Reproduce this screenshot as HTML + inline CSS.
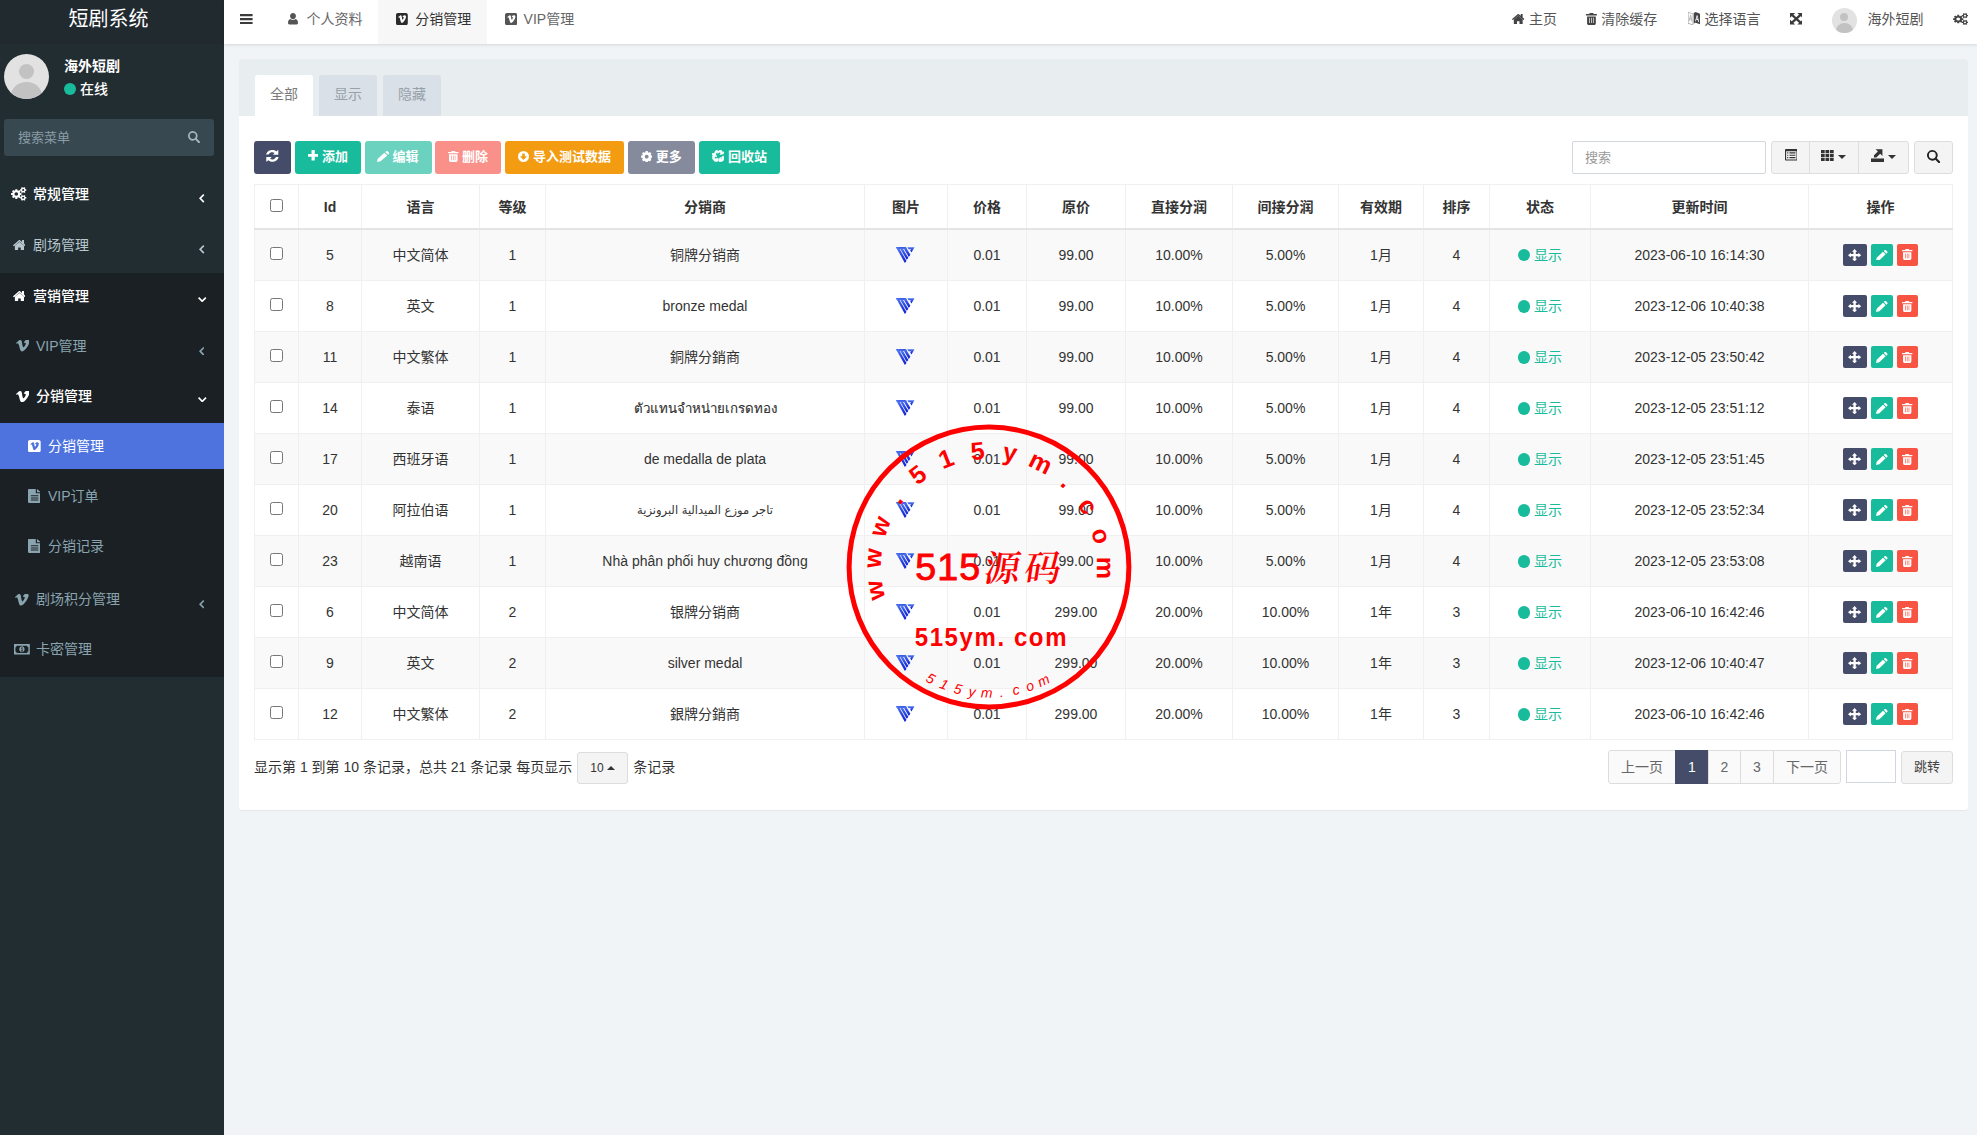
<!DOCTYPE html><html lang="zh-CN"><head><meta charset="utf-8"><title>短剧系统</title><style>
*{box-sizing:border-box;margin:0;padding:0}
html,body{width:1977px;height:1135px;overflow:hidden}
body{font-family:"Liberation Sans", "Noto Sans CJK SC", sans-serif;font-size:14px;line-height:20px;color:#333;background:#f1f4f6;position:relative}
.ic{display:inline-block;vertical-align:middle;fill:currentColor;flex:none}
/* sidebar */
#side{position:absolute;left:0;top:0;width:224px;height:1135px;background:#222d32;color:#b8c7ce}
#logo{position:absolute;left:0;top:0;width:224px;height:44px;background:#202a2f;color:#fff;font-size:20px;line-height:38px;text-align:center;padding-right:7px}
#avatar{position:absolute;left:4px;top:54px;width:45px;height:45px;border-radius:50%;background:#e2e2e2;overflow:hidden}
#avatar i{position:absolute;display:block;background:#c2c2c2;border-radius:50%}
#uname{position:absolute;left:64px;top:56px;color:#fff;font-weight:bold;font-size:14px;line-height:20px}
#ustat{position:absolute;left:64px;top:79px;color:#fff;font-size:14px;line-height:20px;font-weight:500}
#ustat b{display:inline-block;width:12px;height:12px;border-radius:50%;background:#18bc9c;vertical-align:-1px;margin-right:4px}
#sbox{position:absolute;left:4px;top:119px;width:210px;height:37px;background:#374850;border-radius:3px;color:#8a9ca6;font-size:13px;line-height:37px;padding-left:14px}
.mi{position:absolute;left:0;width:224px;height:50px;line-height:50px;font-size:14px;color:#b8c7ce;white-space:nowrap}
.mi span{position:absolute}
.mi.w{color:#fff;font-weight:500}
.mi.w2{color:#fff}
.mi.s{color:#8aa4af}
.mi .arr{right:17px;}
#dark{position:absolute;left:0;top:273px;width:224px;height:404px;background:#1a2024}
#act{position:absolute;left:0;top:423px;width:224px;height:46px;background:#4e73df}
/* navbar */
#nav{position:absolute;left:224px;top:0;width:1753px;height:44px;background:#fff;box-shadow:0 1px 3px rgba(0,0,0,.12)}
#nav .tab{position:absolute;top:0;height:44px;line-height:38px;font-size:14px;color:#666;white-space:nowrap}
#nav .tab.on{background:#f7f7f7;color:#333}
#nav .r{position:absolute;top:0;height:44px;line-height:38px;font-size:14px;color:#555;white-space:nowrap}
/* panel */
#panel{position:absolute;left:239px;top:59px;width:1729px;height:751px;background:#fff;border-radius:3px;box-shadow:0 1px 1px rgba(0,0,0,.05)}
#phead{position:absolute;left:0;top:0;width:100%;height:57px;background:#e8edf0;border-radius:3px 3px 0 0}
.pt{position:absolute;top:16px;height:41px;width:58px;line-height:38.500px;text-align:center;font-size:14px;color:#97a1a8;background:#d9e0e7;border-radius:3px 3px 0 0}
.pt.on{background:#fff;color:#7b7b7b}
.btn{position:absolute;top:141px;height:33px;border-radius:3px;color:#fff;font-size:13px;font-weight:bold;line-height:32px;white-space:nowrap}
/* table */
.tb{position:absolute;left:254px;top:184px;border-collapse:collapse;table-layout:fixed;width:1699px;font-size:14px;color:#333}
.tb th,.tb td{border:1px solid #f0f0f0;text-align:center;vertical-align:middle;padding:0;white-space:nowrap;overflow:hidden;line-height:20px}
.tb th{height:44px;padding-top:2px;font-weight:bold;border-bottom:2px solid #e4e4e4;color:#333}
.tb td{height:51px}
.tb tbody tr:first-child td{height:52px}
.tb tbody tr:nth-child(odd){background:#f9f9f9}
.cb{display:inline-block;width:13px;height:13px;border:1px solid #767676;border-radius:2.500px;background:#fff;vertical-align:middle;position:relative;top:-3px}
.st{color:#18bc9c}
.dot{display:inline-block;width:12.2px;height:12.2px;border-radius:50%;background:#18bc9c;margin-right:3.600px;vertical-align:-1.500px}
.ob{display:inline-flex;align-items:center;justify-content:center;height:21.800px;border-radius:2px;margin:0 2.150px;color:#fff;vertical-align:middle}
.b1{background:#444c69;width:23.700px}.b2{background:#18bc9c;width:21.400px}.b3{background:#f75444;width:21px}
.thumb{vertical-align:middle;position:relative;top:-1px;left:-0.500px}
.ar{font-family:"DejaVu Sans","Liberation Sans",sans-serif;font-size:11.500px}
.tb td.th{padding-top:2px;font-size:13.300px;-webkit-text-stroke:0.150px #333}
/* footer */
#info{position:absolute;left:254px;top:750px;height:34px;line-height:34px;font-size:14px;color:#333;white-space:nowrap}
#psize{display:inline-block;width:51px;height:32px;border:1px solid #ddd;background:#f4f4f4;border-radius:3px;text-align:center;line-height:30px;font-size:12px;margin:2px 5px 0 5px;vertical-align:top}
.pg{position:absolute;top:750px;height:34px;line-height:32px;text-align:center;font-size:14px;color:#666;border:1px solid #ddd;background:#fafafa}
.stamp{position:absolute;pointer-events:none}
</style></head><body><div id="side"><div id="logo">短剧系统</div><div id="avatar"><i style="left:15px;top:10px;width:15px;height:15px"></i><i style="left:7px;top:28px;width:31px;height:28px"></i></div><div id="uname">海外短剧</div><div id="ustat"><b></b>在线</div><div id="sbox">搜索菜单</div><svg class="ic " width="12" height="12.2" viewBox="1.2 1.2 13.6 13.6" preserveAspectRatio="none" style="position:absolute;left:188px;top:131px;fill:#a9b7be"><path fill-rule="evenodd" d="M6.600 1.200a5.400 5.400 0 0 1 4.500 8.400l3.400 3.400c.4.400.4 1 0 1.400l-.1.100c-.4.400-1 .4-1.400 0L9.600 11.100A5.400 5.400 0 1 1 6.600 1.200zm0 1.900a3.500 3.500 0 1 0 0 7 3.500 3.500 0 0 0 0-7z"/></svg><div id="dark"></div><div id="act"></div><div class="mi w" style="top:169px"><span style="left:33px">常规管理</span></div><svg class="ic " width="15.4" height="13.9" viewBox="0.2 0.6 15.7 15" preserveAspectRatio="none" style="position:absolute;left:11.4px;top:187.1px;fill:#fff"><path fill-rule="evenodd" d="M10.90 7.15 L10.90 9.25 L9.57 9.22 L9.13 10.29 L10.09 11.20 L8.60 12.69 L7.69 11.73 L6.62 12.17 L6.65 13.50 L4.55 13.50 L4.58 12.17 L3.51 11.73 L2.60 12.69 L1.11 11.20 L2.07 10.29 L1.63 9.22 L0.30 9.25 L0.30 7.15 L1.63 7.18 L2.07 6.11 L1.11 5.20 L2.60 3.71 L3.51 4.67 L4.58 4.23 L4.55 2.90 L6.65 2.90 L6.62 4.23 L7.69 4.67 L8.60 3.71 L10.09 5.20 L9.13 6.11 L9.57 7.18Z M3.70 8.20a1.90 1.90 0 1 0 3.80 0a1.90 1.90 0 1 0 -3.80 0Z M15.79 3.05 L15.79 4.75 L14.87 4.69 L14.42 5.47 L14.93 6.23 L13.45 7.09 L13.05 6.26 L12.15 6.26 L11.75 7.09 L10.27 6.23 L10.78 5.47 L10.33 4.69 L9.41 4.75 L9.41 3.05 L10.33 3.11 L10.78 2.33 L10.27 1.57 L11.75 0.71 L12.15 1.54 L13.05 1.54 L13.45 0.71 L14.93 1.57 L14.42 2.33 L14.87 3.11Z M11.50 3.90a1.10 1.10 0 1 0 2.20 0a1.10 1.10 0 1 0 -2.20 0Z M15.79 11.45 L15.79 13.15 L14.87 13.09 L14.42 13.87 L14.93 14.63 L13.45 15.49 L13.05 14.66 L12.15 14.66 L11.75 15.49 L10.27 14.63 L10.78 13.87 L10.33 13.09 L9.41 13.15 L9.41 11.45 L10.33 11.51 L10.78 10.73 L10.27 9.97 L11.75 9.11 L12.15 9.94 L13.05 9.94 L13.45 9.11 L14.93 9.97 L14.42 10.73 L14.87 11.51Z M11.50 12.30a1.10 1.10 0 1 0 2.20 0a1.10 1.10 0 1 0 -2.20 0Z"/></svg><svg class="ic " width="5.4" height="8.7" viewBox="5 3.2 6.1 9.6" preserveAspectRatio="none" style="position:absolute;left:199.2px;top:194.3px;fill:#fff"><path d="M9.800 3.200l1.300 1.300L7.600 8l3.500 3.500-1.300 1.300L5 8z"/></svg><div class="mi " style="top:220px"><span style="left:33px">剧场管理</span></div><svg class="ic " width="12.9" height="10.9" viewBox="0.5 1.3 15 12.1" preserveAspectRatio="none" style="position:absolute;left:12.6px;top:239.5px;fill:#b8c7ce"><path d="M8 3.400l5.300 4.400v4.900c0 .4-.3.700-.7.700H9.500v-3.700h-3v3.700H3.400c-.4 0-.7-.3-.7-.7V7.800L8 3.400zM15.400 7.500l-.7.800c-.1.100-.3.100-.4 0L8 3 1.700 8.300c-.1.100-.3.100-.4 0l-.7-.8c-.1-.1-.1-.3 0-.4L7.300 1.500c.4-.3 1-.3 1.400 0l2.300 1.900V1.600c0-.2.100-.3.300-.3h1.700c.2 0 .3.100.3.300v3.700l2.100 1.800c.1.100.1.300 0 .4z"/></svg><svg class="ic " width="5.4" height="8.7" viewBox="5 3.2 6.1 9.6" preserveAspectRatio="none" style="position:absolute;left:199.2px;top:245.4px;fill:#b8c7ce"><path d="M9.800 3.200l1.300 1.300L7.600 8l3.500 3.500-1.300 1.300L5 8z"/></svg><div class="mi w" style="top:271px"><span style="left:33px">营销管理</span></div><svg class="ic " width="12.9" height="10.9" viewBox="0.5 1.3 15 12.1" preserveAspectRatio="none" style="position:absolute;left:12.6px;top:290.6px;fill:#fff"><path d="M8 3.400l5.300 4.400v4.900c0 .4-.3.700-.7.700H9.500v-3.700h-3v3.700H3.400c-.4 0-.7-.3-.7-.7V7.800L8 3.400zM15.400 7.500l-.7.800c-.1.100-.3.100-.4 0L8 3 1.700 8.300c-.1.100-.3.100-.4 0l-.7-.8c-.1-.1-.1-.3 0-.4L7.300 1.500c.4-.3 1-.3 1.400 0l2.300 1.900V1.600c0-.2.100-.3.300-.3h1.700c.2 0 .3.100.3.300v3.700l2.100 1.800c.1.100.1.300 0 .4z"/></svg><svg class="ic " width="8.4" height="5.4" viewBox="3.2 4.9 9.6 6.1" preserveAspectRatio="none" style="position:absolute;left:198.4px;top:296.9px;fill:#fff"><path d="M3.200 6.200l1.300-1.300L8 8.400l3.500-3.500 1.300 1.300L8 11z"/></svg><div class="mi s" style="top:321px"><span style="left:36px">VIP管理</span></div><svg class="ic " width="13.4" height="11.4" viewBox="0.5 1.6 15.1 12.8" preserveAspectRatio="none" style="position:absolute;left:15.5px;top:340.4px;fill:#8aa4af"><path d="M15 4.600c-.1 1.400-1.100 3.400-3 5.900-2 2.600-3.700 3.900-5.100 3.900-.9 0-1.600-.8-2.200-2.400L3.500 7.600C3.100 6 2.600 5.200 2.100 5.200c-.1 0-.5.200-1.200.700L.2 5c.8-.7 1.500-1.300 2.200-2 1-.9 1.800-1.300 2.300-1.400 1.200-.1 1.900.7 2.200 2.400.3 1.900.5 3 .6 3.500.3 1.500.7 2.300 1.100 2.300.3 0 .8-.5 1.500-1.500.7-1 1-1.800 1.100-2.300.1-.9-.3-1.300-1.100-1.300-.4 0-.8.100-1.200.3.800-2.600 2.300-3.900 4.500-3.800 1.700.1 2.400 1.100 2.300 3.200z" transform="translate(0.300,0)"/></svg><svg class="ic " width="5.4" height="8.7" viewBox="5 3.2 6.1 9.6" preserveAspectRatio="none" style="position:absolute;left:199.1px;top:346.5px;fill:#8aa4af"><path d="M9.800 3.200l1.300 1.300L7.600 8l3.500 3.500-1.300 1.300L5 8z"/></svg><div class="mi w" style="top:371px"><span style="left:36px">分销管理</span></div><svg class="ic " width="13.4" height="11.4" viewBox="0.5 1.6 15.1 12.8" preserveAspectRatio="none" style="position:absolute;left:15.5px;top:390.5px;fill:#fff"><path d="M15 4.600c-.1 1.400-1.100 3.400-3 5.900-2 2.600-3.700 3.900-5.100 3.900-.9 0-1.600-.8-2.200-2.400L3.500 7.600C3.100 6 2.600 5.200 2.100 5.200c-.1 0-.5.200-1.200.700L.2 5c.8-.7 1.500-1.300 2.200-2 1-.9 1.800-1.300 2.300-1.400 1.200-.1 1.900.7 2.200 2.400.3 1.900.5 3 .6 3.500.3 1.500.7 2.300 1.100 2.300.3 0 .8-.5 1.500-1.500.7-1 1-1.800 1.100-2.300.1-.9-.3-1.300-1.100-1.300-.4 0-.8.100-1.200.3.800-2.600 2.300-3.900 4.500-3.800 1.700.1 2.400 1.100 2.300 3.200z" transform="translate(0.300,0)"/></svg><svg class="ic " width="8.6" height="5.6" viewBox="3.2 4.9 9.6 6.1" preserveAspectRatio="none" style="position:absolute;left:198.2px;top:396.9px;fill:#fff"><path d="M3.200 6.200l1.300-1.300L8 8.400l3.500-3.500 1.300 1.300L8 11z"/></svg><div class="mi w2" style="top:421px"><span style="left:48px">分销管理</span></div><svg class="ic " width="12.7" height="12.4" viewBox="1.5 1.5 13 13" preserveAspectRatio="none" style="position:absolute;left:27.9px;top:439.8px;fill:#fff"><path fill-rule="evenodd" d="M3.600 1.500h8.800c1.200 0 2.100.9 2.100 2.100v8.800c0 1.200-.9 2.100-2.100 2.100H3.600c-1.200 0-2.100-.9-2.100-2.100V3.600c0-1.200.9-2.100 2.100-2.100zM12.600 5.700c.1-1.300-.6-1.900-1.700-1.900-1.200 0-2 .8-2.300 2.200.6-.3 1.400-.3 1.300.4 0 .5-.4 1.100-.7 1.700-.4.600-.6.700-.9-.2-.3-1-.4-2.600-.7-3.400-.3-.7-.9-.8-1.500-.4-.8.500-1.500 1.200-2.200 1.800l.5.600c.4-.3.800-.5 1-.2.400.600.9 3.300 1.500 4.800.4.900 1 1.200 1.700.8 1.200-.7 3.700-3.600 4-6.200z"/></svg><div class="mi s" style="top:471px"><span style="left:48px">VIP订单</span></div><svg class="ic " width="12.6" height="13.9" viewBox="2 1 11 14" preserveAspectRatio="none" style="position:absolute;left:27.7px;top:489.1px;fill:#8aa4af"><path fill-rule="evenodd" d="M2.500 1h6.300v4.200H13v9c0 .5-.4.800-.8.800H2.800c-.5 0-.8-.4-.8-.8V1.800c0-.5.300-.8.500-.8zM9.800 1.100c.2.100.4.200.6.400l2.200 2.200c.2.200.3.400.4.600H9.800V1.100zM4.500 7.300v1h6.500v-1H4.500zM4.500 9.500v1h6.500v-1H4.500zM4.500 11.700v1h6.500v-1H4.500z"/></svg><div class="mi s" style="top:521px"><span style="left:48px">分销记录</span></div><svg class="ic " width="12.6" height="13.9" viewBox="2 1 11 14" preserveAspectRatio="none" style="position:absolute;left:27.7px;top:539.2px;fill:#8aa4af"><path fill-rule="evenodd" d="M2.500 1h6.300v4.200H13v9c0 .5-.4.800-.8.800H2.800c-.5 0-.8-.4-.8-.8V1.800c0-.5.300-.8.500-.8zM9.800 1.100c.2.100.4.200.6.400l2.200 2.200c.2.200.3.400.4.600H9.800V1.100zM4.500 7.300v1h6.500v-1H4.500zM4.500 9.500v1h6.500v-1H4.500zM4.500 11.700v1h6.500v-1H4.500z"/></svg><div class="mi s" style="top:574px"><span style="left:36px">剧场积分管理</span></div><svg class="ic " width="13.4" height="11.6" viewBox="0.5 1.6 15.1 12.8" preserveAspectRatio="none" style="position:absolute;left:15.3px;top:594.3px;fill:#8aa4af"><path d="M15 4.600c-.1 1.400-1.100 3.400-3 5.900-2 2.600-3.700 3.900-5.100 3.900-.9 0-1.600-.8-2.200-2.400L3.500 7.600C3.100 6 2.600 5.200 2.100 5.200c-.1 0-.5.200-1.200.700L.2 5c.8-.7 1.500-1.300 2.200-2 1-.9 1.800-1.300 2.300-1.400 1.200-.1 1.900.7 2.200 2.400.3 1.900.5 3 .6 3.500.3 1.500.7 2.300 1.100 2.300.3 0 .8-.5 1.500-1.500.7-1 1-1.800 1.100-2.300.1-.9-.3-1.300-1.100-1.300-.4 0-.8.100-1.200.3.800-2.600 2.300-3.900 4.500-3.800 1.700.1 2.400 1.100 2.300 3.200z" transform="translate(0.300,0)"/></svg><svg class="ic " width="5.4" height="8.5" viewBox="5 3.2 6.1 9.6" preserveAspectRatio="none" style="position:absolute;left:198.9px;top:600.4px;fill:#8aa4af"><path d="M9.800 3.200l1.300 1.300L7.600 8l3.500 3.500-1.300 1.300L5 8z"/></svg><div class="mi s" style="top:624px"><span style="left:36px">卡密管理</span></div><svg class="ic " width="15.8" height="10.6" viewBox="0.8 3.2 14.4 9.6" preserveAspectRatio="none" style="position:absolute;left:14.2px;top:644.4px;fill:#8aa4af"><path fill-rule="evenodd" d="M.8 3.200h14.400v9.600H.8V3.200zM3.200 4.700c0 .8-.5 1.400-1.100 1.400v3.800c.6 0 1.100.6 1.100 1.400h9.600c0-.8.500-1.400 1.100-1.400V6.100c-.6 0-1.100-.6-1.100-1.400H3.200zM8 5.300c1.400 0 2.400 1.200 2.400 2.700S9.400 10.700 8 10.700 5.600 9.500 5.600 8 6.600 5.300 8 5.300zM7.100 7l.5.500.3-.3v2H7.100v.7h2v-.7h-.6V6.200h-.6L7.100 7z"/></svg></div><div id="nav"><div class="tab on" style="left:154px;width:109px"></div><div class="tab" style="left:82.6px">个人资料</div><div class="tab" style="left:191.3px;color:#333">分销管理</div><div class="tab" style="left:299.6px">VIP管理</div><div class="r" style="left:1305px">主页</div><div class="r" style="left:1377.3px">清除缓存</div><div class="r" style="left:1480.6px">选择语言</div><div class="r" style="left:1643.4px">海外短剧</div><span style="position:absolute;left:1607.7px;top:8px;width:25.3px;height:24.8px;border-radius:50%;background:#e2e2e2;overflow:hidden"><i style="position:absolute;left:8.600px;top:4.500px;width:8px;height:8px;border-radius:50%;background:#c2c2c2"></i><i style="position:absolute;left:4.200px;top:14.500px;width:17px;height:16px;border-radius:50%;background:#c2c2c2"></i></span></div><svg class="ic " width="12.6" height="10.2" viewBox="1 2.5 14 11" preserveAspectRatio="none" style="position:absolute;left:240.4px;top:13.9px;fill:#3c3c3c"><path d="M1 2.5h14v2.4H1zM1 6.8h14v2.4H1zM1 11.1h14v2.4H1z"/></svg><svg class="ic " width="10" height="11.6" viewBox="2.2 1.2 11.6 13.8" preserveAspectRatio="none" style="position:absolute;left:288.1px;top:13.4px;fill:#555"><path d="M8 1.2c2 0 3.4 1.6 3.4 3.6S10 8.6 8 8.6 4.600 6.800 4.600 4.800 6 1.200 8 1.200zM2.200 13.200c0-2.600 1-4.600 2.800-4.800.8.700 1.800 1.100 3 1.100s2.200-.4 3-1.100c1.800.2 2.800 2.200 2.800 4.800 0 1.100-.9 1.800-2 1.800H4.200c-1.100 0-2-.7-2-1.800z"/></svg><svg class="ic " width="11.8" height="12.3" viewBox="1.5 1.5 13 13" preserveAspectRatio="none" style="position:absolute;left:396px;top:12.7px;fill:#2b2b2b"><path fill-rule="evenodd" d="M3.600 1.500h8.800c1.200 0 2.100.9 2.100 2.100v8.800c0 1.200-.9 2.100-2.100 2.100H3.600c-1.200 0-2.100-.9-2.100-2.100V3.600c0-1.200.9-2.100 2.100-2.100zM12.600 5.700c.1-1.300-.6-1.900-1.700-1.900-1.200 0-2 .8-2.300 2.200.6-.3 1.400-.3 1.300.4 0 .5-.4 1.100-.7 1.700-.4.600-.6.700-.9-.2-.3-1-.4-2.600-.7-3.400-.3-.7-.9-.8-1.500-.4-.8.500-1.500 1.200-2.200 1.800l.5.600c.4-.3.800-.5 1-.2.400.600.9 3.300 1.500 4.800.4.900 1 1.200 1.700.8 1.200-.7 3.700-3.600 4-6.200z"/></svg><svg class="ic " width="12.2" height="12.3" viewBox="1.5 1.5 13 13" preserveAspectRatio="none" style="position:absolute;left:504.6px;top:12.7px;fill:#555"><path fill-rule="evenodd" d="M3.600 1.500h8.800c1.200 0 2.100.9 2.100 2.100v8.800c0 1.200-.9 2.100-2.100 2.100H3.600c-1.200 0-2.100-.9-2.100-2.100V3.600c0-1.200.9-2.100 2.100-2.100zM12.600 5.700c.1-1.300-.6-1.900-1.700-1.900-1.200 0-2 .8-2.300 2.200.6-.3 1.400-.3 1.300.4 0 .5-.4 1.100-.7 1.700-.4.600-.6.700-.9-.2-.3-1-.4-2.600-.7-3.400-.3-.7-.9-.8-1.500-.4-.8.500-1.500 1.200-2.200 1.800l.5.600c.4-.3.800-.5 1-.2.400.600.9 3.300 1.500 4.800.4.900 1 1.200 1.700.8 1.200-.7 3.700-3.600 4-6.200z"/></svg><svg class="ic " width="12.5" height="10.3" viewBox="0.5 1.3 15 12.1" preserveAspectRatio="none" style="position:absolute;left:1511.6px;top:13.8px;fill:#444"><path d="M8 3.400l5.300 4.400v4.900c0 .4-.3.700-.7.700H9.500v-3.700h-3v3.700H3.400c-.4 0-.7-.3-.7-.7V7.800L8 3.400zM15.400 7.500l-.7.800c-.1.100-.3.100-.4 0L8 3 1.700 8.300c-.1.100-.3.100-.4 0l-.7-.8c-.1-.1-.1-.3 0-.4L7.300 1.500c.4-.3 1-.3 1.400 0l2.300 1.900V1.600c0-.2.100-.3.300-.3h1.700c.2 0 .3.100.3.300v3.700l2.100 1.800c.1.100.1.300 0 .4z"/></svg><svg class="ic " width="10.9" height="12" viewBox="1.5 1 13 14" preserveAspectRatio="none" style="position:absolute;left:1586.1px;top:12.8px;fill:#444"><path fill-rule="evenodd" d="M6 1h4l.7 1.300H14c.3 0 .5.200.5.500v.7c0 .3-.2.500-.5.500H2c-.3 0-.5-.2-.5-.5v-.7c0-.3.200-.5.500-.5h3.300L6 1zM2.800 5h10.400v8.200c0 1-.8 1.800-1.800 1.800H4.600c-1 0-1.800-.8-1.800-1.800V5zM5.400 6.600v6.200h.8V6.600zM7.600 6.600v6.200h.8V6.600zM9.800 6.600v6.200h.8V6.600z"/></svg><svg class="ic " width="12.1" height="13.3" viewBox="1 2.4 14 12.1" preserveAspectRatio="none" style="position:absolute;left:1687.7px;top:12px;fill:#444"><path fill-rule="evenodd" fill-opacity="0.45" d="M1 2.500l6 1.200v10.800l-6-1.400zM1.700 3.400v9.100l4.600 1.100V4.300zM2.800 10.600l.5-1.600 1.500.4.400 1.700.9.200L4.600 5.200l-1-.2-1.700 5.400zM3.600 8.100l.5-1.800.5 2z"/><path fill-rule="evenodd" d="M7.600 3.200l2.300-.8 5.100 1.600v9.600L9 12l-1.400 1.600zM10.200 10.800l.5-1.500 1.700.5.500 1.600 1 .3-1.800-6.100-1-.3-1.800 5.200zM10.900 8.400l.6-1.900.6 2.300z"/></svg><svg class="ic " width="12.5" height="11.5" viewBox="0 0 13 13" preserveAspectRatio="none" style="position:absolute;left:1789.5px;top:13.3px;fill:#3a3a3a"><path d="M0 0H5.400L0 5.400ZM13 0V5.400L7.600 0ZM0 13V7.600L5.400 13ZM13 13H7.600L13 7.600ZM1.300 3.100L3.100 1.300L11.700 9.900L9.900 11.700ZM9.900 1.300L11.700 3.100L3.100 11.700L1.300 9.900Z"/></svg><svg class="ic " width="15.2" height="12" viewBox="0.2 0.6 15.7 15" preserveAspectRatio="none" style="position:absolute;left:1952.8px;top:13.3px;fill:#444"><path fill-rule="evenodd" d="M10.90 7.15 L10.90 9.25 L9.57 9.22 L9.13 10.29 L10.09 11.20 L8.60 12.69 L7.69 11.73 L6.62 12.17 L6.65 13.50 L4.55 13.50 L4.58 12.17 L3.51 11.73 L2.60 12.69 L1.11 11.20 L2.07 10.29 L1.63 9.22 L0.30 9.25 L0.30 7.15 L1.63 7.18 L2.07 6.11 L1.11 5.20 L2.60 3.71 L3.51 4.67 L4.58 4.23 L4.55 2.90 L6.65 2.90 L6.62 4.23 L7.69 4.67 L8.60 3.71 L10.09 5.20 L9.13 6.11 L9.57 7.18Z M3.70 8.20a1.90 1.90 0 1 0 3.80 0a1.90 1.90 0 1 0 -3.80 0Z M15.79 3.05 L15.79 4.75 L14.87 4.69 L14.42 5.47 L14.93 6.23 L13.45 7.09 L13.05 6.26 L12.15 6.26 L11.75 7.09 L10.27 6.23 L10.78 5.47 L10.33 4.69 L9.41 4.75 L9.41 3.05 L10.33 3.11 L10.78 2.33 L10.27 1.57 L11.75 0.71 L12.15 1.54 L13.05 1.54 L13.45 0.71 L14.93 1.57 L14.42 2.33 L14.87 3.11Z M11.50 3.90a1.10 1.10 0 1 0 2.20 0a1.10 1.10 0 1 0 -2.20 0Z M15.79 11.45 L15.79 13.15 L14.87 13.09 L14.42 13.87 L14.93 14.63 L13.45 15.49 L13.05 14.66 L12.15 14.66 L11.75 15.49 L10.27 14.63 L10.78 13.87 L10.33 13.09 L9.41 13.15 L9.41 11.45 L10.33 11.51 L10.78 10.73 L10.27 9.97 L11.75 9.11 L12.15 9.94 L13.05 9.94 L13.45 9.11 L14.93 9.97 L14.42 10.73 L14.87 11.51Z M11.50 12.30a1.10 1.10 0 1 0 2.20 0a1.10 1.10 0 1 0 -2.20 0Z"/></svg><div id="panel"><div id="phead"><div class="pt on" style="left:16px">全部</div><div class="pt" style="left:80px">显示</div><div class="pt" style="left:144px">隐藏</div></div></div><div class="btn" style="left:254px;width:37px;background:#444c69"></div><svg class="ic " width="12.6" height="11.7" viewBox="1.4 1.4 13.2 13.2" preserveAspectRatio="none" style="position:absolute;left:266.4px;top:150.3px;fill:#fff"><path d="M14.300 1.800v4.600c0 .2-.2.400-.4.400H9.300c-.4 0-.5-.4-.3-.7l1.400-1.400A4 4 0 0 0 4.300 6.300c-.1.200-.2.300-.4.300H1.800c-.2 0-.4-.2-.3-.4A6.600 6.600 0 0 1 12.300 3l1.300-1.400c.3-.3.700-.1.700.2zM1.700 14.200V9.600c0-.2.200-.4.400-.4h4.600c.4 0 .5.400.3.700l-1.400 1.400a4 4 0 0 0 6.100-1.600c.1-.2.200-.3.400-.3h2.100c.2 0 .4.200.3.400A6.600 6.600 0 0 1 3.700 13l-1.300 1.400c-.3.300-.7.100-.7-.2z"/></svg><div class="btn" style="left:295px;width:66px;background:#18bc9c"><span style="position:absolute;left:27px;top:0">添加</span></div><svg class="ic " width="10.3" height="11" viewBox="1.3 1.8 13.4 12.9" preserveAspectRatio="none" style="position:absolute;left:308px;top:150.3px;fill:#fff"><path d="M6.400 1.800h3.200c.3 0 .5.200.5.500v4.100h4.100c.3 0 .5.200.5.500v2.200c0 .3-.2.500-.5.500h-4.100v4.100c0 .3-.2.500-.5.500H6.400c-.3 0-.5-.2-.5-.5V9.600H1.800c-.3 0-.5-.2-.5-.5V6.900c0-.3.200-.5.500-.5h4.100V2.300c0-.3.200-.5.500-.5z"/></svg><div class="btn" style="left:365px;width:67px;background:#6bd2bf"><span style="position:absolute;left:27.399999999999977px;top:0">编辑</span></div><svg class="ic " width="12.3" height="11" viewBox="1.5 0.7 13.8 13.8" preserveAspectRatio="none" style="position:absolute;left:377px;top:151px;fill:#fff"><path d="M1.500 14.500l.8-4 7.500-7.500 3.200 3.200-7.500 7.500-4 .8zM10.700 2.100l1-1c.5-.5 1.300-.5 1.800 0l1.400 1.400c.5.500.5 1.300 0 1.800l-1 1-3.200-3.200z"/></svg><div class="btn" style="left:435px;width:66px;background:#f9918a"><span style="position:absolute;left:27px;top:0">删除</span></div><svg class="ic " width="10.6" height="11" viewBox="1.5 1 13 14" preserveAspectRatio="none" style="position:absolute;left:448.1px;top:150.8px;fill:#fff"><path fill-rule="evenodd" d="M6 1h4l.7 1.300H14c.3 0 .5.200.5.500v.7c0 .3-.2.500-.5.500H2c-.3 0-.5-.2-.5-.5v-.7c0-.3.200-.5.500-.5h3.300L6 1zM2.800 5h10.400v8.200c0 1-.8 1.800-1.800 1.800H4.600c-1 0-1.800-.8-1.800-1.800V5zM5.400 6.600v6.200h.8V6.600zM7.600 6.600v6.200h.8V6.600zM9.800 6.600v6.200h.8V6.600z"/></svg><div class="btn" style="left:505px;width:119px;background:#f39c12"><span style="position:absolute;left:28px;top:0">导入测试数据</span></div><svg class="ic " width="11" height="11" viewBox="1.2 1.2 13.6 13.6" preserveAspectRatio="none" style="position:absolute;left:518.1px;top:150.6px;fill:#fff"><path fill-rule="evenodd" d="M8 1.200a6.800 6.800 0 1 1 0 13.600A6.800 6.800 0 0 1 8 1.200zM6.800 4.200c-.2 0-.4.200-.4.400v3.200H4.600c-.4 0-.5.400-.3.700l3.400 3.500c.2.200.4.200.6 0l3.400-3.500c.2-.3.100-.7-.3-.7H9.600V4.600c0-.2-.2-.4-.4-.4H6.800z"/></svg><div class="btn" style="left:628px;width:67px;background:#858b9d"><span style="position:absolute;left:27.700000000000045px;top:0">更多</span></div><svg class="ic " width="11.4" height="11.4" viewBox="1.2 1.2 13.6 13.6" preserveAspectRatio="none" style="position:absolute;left:640.6px;top:150.6px;fill:#fff"><path fill-rule="evenodd" d="M14.67 6.67 L14.67 9.33 L13.33 9.37 L12.73 10.80 L13.65 11.78 L11.78 13.65 L10.80 12.73 L9.37 13.33 L9.33 14.67 L6.67 14.67 L6.63 13.33 L5.20 12.73 L4.22 13.65 L2.35 11.78 L3.27 10.80 L2.67 9.37 L1.33 9.33 L1.33 6.67 L2.67 6.63 L3.27 5.20 L2.35 4.22 L4.22 2.35 L5.20 3.27 L6.63 2.67 L6.67 1.33 L9.33 1.33 L9.37 2.67 L10.80 3.27 L11.78 2.35 L13.65 4.22 L12.73 5.20 L13.33 6.63Z M5.70 8.00a2.30 2.30 0 1 0 4.60 0a2.30 2.30 0 1 0 -4.60 0Z"/></svg><div class="btn" style="left:699px;width:81px;background:#18bc9c"><span style="position:absolute;left:28.899999999999977px;top:0">回收站</span></div><svg class="ic " width="12.7" height="12.2" viewBox="0.8 1.5 14 14" preserveAspectRatio="none" style="position:absolute;left:711.8px;top:150.1px;fill:#fff"><path stroke="#fff" stroke-width="0.9" stroke-linejoin="round" d="M7.500 11.100l-.1 3.300H4.200c-.5 0-1-.3-1.300-.8L1.400 11l2.500-.1.600 1zM5 5.100L3.700 7.400 1 5.900l3.600-.2L3.800 4.300l1.200-2c.3-.5.800-.8 1.300-.8L8 4.200l-.8-.5zM14.500 9.500c.3.500.3 1.100 0 1.600l-1.300 2.400c-.3.500-.8.800-1.400.8H10v1.700l-2-3 2-3v1.700h2.200l-1-1.800 2.100-1.300zM13 6.100l-3.500.3 1.400-.8-1.200-2-2.800 1.600 1.700-2.900C8.900 1.800 9.500 1.500 10 1.500c.6 0 1.100.3 1.400.8l1.300 2.200 1.500-.9zM1.400 10.200c-.3-.5-.3-1.100 0-1.600l.9-1.500-1.500-.8 3.600-.3 1.600 3.300-1.500-.9-1 1.800z"/></svg><div style="position:absolute;left:1572px;top:141px;width:194px;height:33px;border:1px solid #d2d6de;border-radius:2px;background:#fff;color:#999;font-size:13px;line-height:31px;padding-left:12px">搜索</div><div style="position:absolute;left:1771px;top:141px;width:138px;height:33px;border:1px solid #ddd;border-radius:3px;background:#f4f4f4"></div><div style="position:absolute;left:1809px;top:142px;width:1px;height:31px;background:#ddd"></div><div style="position:absolute;left:1858px;top:142px;width:1px;height:31px;background:#ddd"></div><svg class="ic " width="12.6" height="11.6" viewBox="1.2 1.8 13.6 12.4" preserveAspectRatio="none" style="position:absolute;left:1784.6px;top:149.3px;fill:#333"><path fill-rule="evenodd" d="M2.400 1.800h11.200c.7 0 1.200.5 1.200 1.200v10c0 .7-.5 1.200-1.200 1.200H2.400c-.7 0-1.200-.5-1.200-1.200V3c0-.7.500-1.200 1.200-1.200zM2.400 4.200V13h11.200V4.200H2.400zM3.500 5.400h1.300v1.200H3.500zM6 5.400h6.500v1.200H6zM3.500 7.900h1.300v1.200H3.500zM6 7.900h6.500v1.200H6zM3.500 10.400h1.300v1.200H3.500zM6 10.400h6.500v1.200H6z"/></svg><svg class="ic " width="12.7" height="11" viewBox="1.3 2.2 13.4 11.6" preserveAspectRatio="none" style="position:absolute;left:1821.2px;top:150px;fill:#333"><path d="M1.300 2.200h3.900v3.300H1.300zM6.050 2.200h3.900v3.300h-3.900zM10.800 2.200h3.900v3.300h-3.900zM1.300 6.350h3.900v3.300H1.300zM6.050 6.350h3.900v3.300h-3.900zM10.800 6.350h3.900v3.300h-3.900zM1.300 10.500h3.900v3.300H1.300zM6.050 10.500h3.900v3.300h-3.900zM10.800 10.500h3.900v3.300h-3.900z"/></svg><div style="position:absolute;left:1838px;top:155px;width:0;height:0;border:4px solid transparent;border-top-color:#333"></div><svg style="position:absolute;left:1871px;top:148.500px" width="13" height="13" viewBox="1 1 14 14" preserveAspectRatio="none"><path fill="#333" d="M1 11.200h14v3.800H1z"/><path fill="#333" d="M6 1.200h7.300v7.300l-2.400-2.400-4.100 4.100H4.200V7.600l4.200-4z"/></svg><div style="position:absolute;left:1888px;top:155px;width:0;height:0;border:4px solid transparent;border-top-color:#333"></div><div style="position:absolute;left:1914px;top:141px;width:39px;height:33px;border:1px solid #ddd;border-radius:3px;background:#f4f4f4"></div><svg class="ic " width="13.4" height="13.4" viewBox="1.2 1.2 13.6 13.6" preserveAspectRatio="none" style="position:absolute;left:1926.8px;top:149.6px;fill:#222"><path fill-rule="evenodd" d="M6.600 1.200a5.400 5.400 0 0 1 4.500 8.400l3.400 3.400c.4.400.4 1 0 1.400l-.1.100c-.4.400-1 .4-1.400 0L9.600 11.100A5.400 5.400 0 1 1 6.600 1.200zm0 1.900a3.500 3.500 0 1 0 0 7 3.500 3.500 0 0 0 0-7z"/></svg><table class="tb"><colgroup><col style="width:44px"><col style="width:63px"><col style="width:118px"><col style="width:66px"><col style="width:319px"><col style="width:83px"><col style="width:79px"><col style="width:99px"><col style="width:107px"><col style="width:106px"><col style="width:85px"><col style="width:66px"><col style="width:101px"><col style="width:218px"><col style="width:144px"></colgroup><thead><tr><th><span class="cb" style="top:-3px"></span></th><th>Id</th><th>语言</th><th>等级</th><th>分销商</th><th>图片</th><th>价格</th><th>原价</th><th>直接分润</th><th>间接分润</th><th>有效期</th><th>排序</th><th>状态</th><th>更新时间</th><th>操作</th></tr></thead><tbody><tr><td><span class="cb"></span></td><td>5</td><td>中文简体</td><td>1</td><td>铜牌分销商</td><td><svg class="thumb" width="18.5" height="16" viewBox="0 0 18.5 16"><defs><linearGradient id="lg" x1="0" y1="0" x2="0" y2="1"><stop offset="0" stop-color="#5078f2"/><stop offset="1" stop-color="#0a1ccf"/></linearGradient></defs><g fill="url(#lg)"><path d="M0 0H9.900L10.800 1.800H0.900Z"/><path d="M0 0.200L2.600 0.200L10.500 14.100L8.900 16Z"/><path d="M4 1.600L6.700 1.600L12.400 11L10.700 12.700Z"/><path d="M7.700 1.600L9.900 0.200L14.400 7.800L12.800 9.900Z"/><path d="M11.300 0.200H18.500L15.500 5.400L14.100 3.300L15.300 2.200H12.600Z"/></g></svg></td><td>0.01</td><td>99.00</td><td>10.00%</td><td>5.00%</td><td>1月</td><td>4</td><td class="st"><i class="dot"></i>显示</td><td>2023-06-10 16:14:30</td><td class="op"><span class="ob b1"><svg class="ic " width="13.2" height="12.4" viewBox="0.8 0.8 14.4 14.4" preserveAspectRatio="none" style=""><path d="M8 .8l2.800 3.100H9.300v2.800h2.800V5.200L15.200 8l-3.100 2.800V9.300H9.300v2.800h1.500L8 15.200l-2.800-3.100h1.500V9.300H3.900v1.500L.8 8l3.100-2.800v1.500h2.800V3.900H5.200z"/></svg></span><span class="ob b2"><svg class="ic " width="11.6" height="10.9" viewBox="1.5 0.7 13.8 13.8" preserveAspectRatio="none" style=""><path d="M1.500 14.500l.8-4 7.500-7.500 3.200 3.200-7.500 7.500-4 .8zM10.700 2.100l1-1c.5-.5 1.300-.5 1.800 0l1.400 1.400c.5.500.5 1.300 0 1.800l-1 1-3.200-3.200z"/></svg></span><span class="ob b3"><svg class="ic " width="10.4" height="11" viewBox="1.5 1 13 14" preserveAspectRatio="none" style=""><path fill-rule="evenodd" d="M6 1h4l.7 1.300H14c.3 0 .5.200.5.500v.7c0 .3-.2.500-.5.500H2c-.3 0-.5-.2-.5-.5v-.7c0-.3.200-.5.500-.5h3.300L6 1zM2.800 5h10.400v8.200c0 1-.8 1.800-1.800 1.800H4.600c-1 0-1.800-.8-1.800-1.800V5zM5.400 6.600v6.200h.8V6.600zM7.600 6.600v6.200h.8V6.600zM9.800 6.600v6.200h.8V6.600z"/></svg></span></td></tr><tr><td><span class="cb"></span></td><td>8</td><td>英文</td><td>1</td><td>bronze medal</td><td><svg class="thumb" width="18.5" height="16" viewBox="0 0 18.5 16"><defs><linearGradient id="lg" x1="0" y1="0" x2="0" y2="1"><stop offset="0" stop-color="#5078f2"/><stop offset="1" stop-color="#0a1ccf"/></linearGradient></defs><g fill="url(#lg)"><path d="M0 0H9.900L10.800 1.800H0.900Z"/><path d="M0 0.200L2.600 0.200L10.500 14.100L8.900 16Z"/><path d="M4 1.600L6.700 1.600L12.400 11L10.700 12.700Z"/><path d="M7.700 1.600L9.900 0.200L14.400 7.800L12.800 9.900Z"/><path d="M11.300 0.200H18.500L15.500 5.400L14.100 3.300L15.300 2.200H12.600Z"/></g></svg></td><td>0.01</td><td>99.00</td><td>10.00%</td><td>5.00%</td><td>1月</td><td>4</td><td class="st"><i class="dot"></i>显示</td><td>2023-12-06 10:40:38</td><td class="op"><span class="ob b1"><svg class="ic " width="13.2" height="12.4" viewBox="0.8 0.8 14.4 14.4" preserveAspectRatio="none" style=""><path d="M8 .8l2.800 3.100H9.300v2.800h2.800V5.200L15.200 8l-3.100 2.800V9.300H9.300v2.800h1.500L8 15.200l-2.800-3.100h1.500V9.300H3.900v1.500L.8 8l3.100-2.800v1.500h2.800V3.900H5.200z"/></svg></span><span class="ob b2"><svg class="ic " width="11.6" height="10.9" viewBox="1.5 0.7 13.8 13.8" preserveAspectRatio="none" style=""><path d="M1.500 14.500l.8-4 7.500-7.500 3.200 3.200-7.500 7.500-4 .8zM10.700 2.100l1-1c.5-.5 1.300-.5 1.800 0l1.400 1.400c.5.500.5 1.300 0 1.800l-1 1-3.200-3.200z"/></svg></span><span class="ob b3"><svg class="ic " width="10.4" height="11" viewBox="1.5 1 13 14" preserveAspectRatio="none" style=""><path fill-rule="evenodd" d="M6 1h4l.7 1.300H14c.3 0 .5.200.5.500v.7c0 .3-.2.500-.5.500H2c-.3 0-.5-.2-.5-.5v-.7c0-.3.200-.5.500-.5h3.300L6 1zM2.800 5h10.400v8.200c0 1-.8 1.800-1.800 1.800H4.600c-1 0-1.800-.8-1.800-1.800V5zM5.400 6.600v6.200h.8V6.600zM7.600 6.600v6.200h.8V6.600zM9.800 6.600v6.200h.8V6.600z"/></svg></span></td></tr><tr><td><span class="cb"></span></td><td>11</td><td>中文繁体</td><td>1</td><td>銅牌分銷商</td><td><svg class="thumb" width="18.5" height="16" viewBox="0 0 18.5 16"><defs><linearGradient id="lg" x1="0" y1="0" x2="0" y2="1"><stop offset="0" stop-color="#5078f2"/><stop offset="1" stop-color="#0a1ccf"/></linearGradient></defs><g fill="url(#lg)"><path d="M0 0H9.900L10.800 1.800H0.900Z"/><path d="M0 0.200L2.600 0.200L10.500 14.100L8.900 16Z"/><path d="M4 1.600L6.700 1.600L12.400 11L10.700 12.700Z"/><path d="M7.700 1.600L9.900 0.200L14.400 7.800L12.800 9.900Z"/><path d="M11.300 0.200H18.500L15.500 5.400L14.100 3.300L15.300 2.200H12.600Z"/></g></svg></td><td>0.01</td><td>99.00</td><td>10.00%</td><td>5.00%</td><td>1月</td><td>4</td><td class="st"><i class="dot"></i>显示</td><td>2023-12-05 23:50:42</td><td class="op"><span class="ob b1"><svg class="ic " width="13.2" height="12.4" viewBox="0.8 0.8 14.4 14.4" preserveAspectRatio="none" style=""><path d="M8 .8l2.800 3.100H9.300v2.800h2.800V5.200L15.200 8l-3.100 2.800V9.300H9.300v2.800h1.500L8 15.200l-2.800-3.100h1.500V9.300H3.900v1.500L.8 8l3.100-2.800v1.500h2.800V3.900H5.200z"/></svg></span><span class="ob b2"><svg class="ic " width="11.6" height="10.9" viewBox="1.5 0.7 13.8 13.8" preserveAspectRatio="none" style=""><path d="M1.500 14.500l.8-4 7.500-7.500 3.200 3.200-7.500 7.500-4 .8zM10.700 2.100l1-1c.5-.5 1.300-.5 1.800 0l1.400 1.400c.5.500.5 1.300 0 1.800l-1 1-3.200-3.200z"/></svg></span><span class="ob b3"><svg class="ic " width="10.4" height="11" viewBox="1.5 1 13 14" preserveAspectRatio="none" style=""><path fill-rule="evenodd" d="M6 1h4l.7 1.300H14c.3 0 .5.200.5.500v.7c0 .3-.2.500-.5.500H2c-.3 0-.5-.2-.5-.5v-.7c0-.3.200-.5.500-.5h3.300L6 1zM2.800 5h10.400v8.200c0 1-.8 1.800-1.800 1.800H4.600c-1 0-1.800-.8-1.800-1.800V5zM5.400 6.600v6.200h.8V6.600zM7.600 6.600v6.200h.8V6.600zM9.800 6.600v6.200h.8V6.600z"/></svg></span></td></tr><tr><td><span class="cb"></span></td><td>14</td><td>泰语</td><td>1</td><td class="th">ตัวแทนจำหน่ายเกรดทอง</td><td><svg class="thumb" width="18.5" height="16" viewBox="0 0 18.5 16"><defs><linearGradient id="lg" x1="0" y1="0" x2="0" y2="1"><stop offset="0" stop-color="#5078f2"/><stop offset="1" stop-color="#0a1ccf"/></linearGradient></defs><g fill="url(#lg)"><path d="M0 0H9.900L10.800 1.800H0.900Z"/><path d="M0 0.200L2.600 0.200L10.500 14.100L8.900 16Z"/><path d="M4 1.600L6.700 1.600L12.400 11L10.700 12.700Z"/><path d="M7.700 1.600L9.900 0.200L14.400 7.800L12.800 9.900Z"/><path d="M11.300 0.200H18.500L15.500 5.400L14.100 3.300L15.300 2.200H12.600Z"/></g></svg></td><td>0.01</td><td>99.00</td><td>10.00%</td><td>5.00%</td><td>1月</td><td>4</td><td class="st"><i class="dot"></i>显示</td><td>2023-12-05 23:51:12</td><td class="op"><span class="ob b1"><svg class="ic " width="13.2" height="12.4" viewBox="0.8 0.8 14.4 14.4" preserveAspectRatio="none" style=""><path d="M8 .8l2.800 3.100H9.300v2.800h2.800V5.200L15.200 8l-3.100 2.800V9.300H9.300v2.800h1.500L8 15.200l-2.800-3.100h1.500V9.300H3.900v1.500L.8 8l3.100-2.800v1.500h2.800V3.900H5.200z"/></svg></span><span class="ob b2"><svg class="ic " width="11.6" height="10.9" viewBox="1.5 0.7 13.8 13.8" preserveAspectRatio="none" style=""><path d="M1.500 14.500l.8-4 7.500-7.500 3.200 3.200-7.500 7.500-4 .8zM10.700 2.100l1-1c.5-.5 1.300-.5 1.800 0l1.400 1.400c.5.500.5 1.300 0 1.800l-1 1-3.200-3.200z"/></svg></span><span class="ob b3"><svg class="ic " width="10.4" height="11" viewBox="1.5 1 13 14" preserveAspectRatio="none" style=""><path fill-rule="evenodd" d="M6 1h4l.7 1.300H14c.3 0 .5.200.5.500v.7c0 .3-.2.500-.5.500H2c-.3 0-.5-.2-.5-.5v-.7c0-.3.200-.5.500-.5h3.300L6 1zM2.800 5h10.400v8.200c0 1-.8 1.800-1.800 1.800H4.600c-1 0-1.800-.8-1.800-1.800V5zM5.400 6.600v6.200h.8V6.600zM7.600 6.600v6.200h.8V6.600zM9.800 6.600v6.200h.8V6.600z"/></svg></span></td></tr><tr><td><span class="cb"></span></td><td>17</td><td>西班牙语</td><td>1</td><td>de medalla de plata</td><td><svg class="thumb" width="18.5" height="16" viewBox="0 0 18.5 16"><defs><linearGradient id="lg" x1="0" y1="0" x2="0" y2="1"><stop offset="0" stop-color="#5078f2"/><stop offset="1" stop-color="#0a1ccf"/></linearGradient></defs><g fill="url(#lg)"><path d="M0 0H9.900L10.800 1.800H0.900Z"/><path d="M0 0.200L2.600 0.200L10.500 14.100L8.900 16Z"/><path d="M4 1.600L6.700 1.600L12.400 11L10.700 12.700Z"/><path d="M7.700 1.600L9.900 0.200L14.400 7.800L12.800 9.900Z"/><path d="M11.300 0.200H18.500L15.500 5.400L14.100 3.300L15.300 2.200H12.600Z"/></g></svg></td><td>0.01</td><td>99.00</td><td>10.00%</td><td>5.00%</td><td>1月</td><td>4</td><td class="st"><i class="dot"></i>显示</td><td>2023-12-05 23:51:45</td><td class="op"><span class="ob b1"><svg class="ic " width="13.2" height="12.4" viewBox="0.8 0.8 14.4 14.4" preserveAspectRatio="none" style=""><path d="M8 .8l2.800 3.100H9.300v2.800h2.800V5.200L15.200 8l-3.100 2.800V9.300H9.300v2.800h1.500L8 15.200l-2.800-3.100h1.500V9.300H3.900v1.500L.8 8l3.100-2.800v1.500h2.800V3.900H5.200z"/></svg></span><span class="ob b2"><svg class="ic " width="11.6" height="10.9" viewBox="1.5 0.7 13.8 13.8" preserveAspectRatio="none" style=""><path d="M1.500 14.500l.8-4 7.500-7.500 3.200 3.200-7.500 7.500-4 .8zM10.700 2.100l1-1c.5-.5 1.300-.5 1.800 0l1.400 1.400c.5.500.5 1.300 0 1.800l-1 1-3.200-3.200z"/></svg></span><span class="ob b3"><svg class="ic " width="10.4" height="11" viewBox="1.5 1 13 14" preserveAspectRatio="none" style=""><path fill-rule="evenodd" d="M6 1h4l.7 1.300H14c.3 0 .5.200.5.500v.7c0 .3-.2.500-.5.500H2c-.3 0-.5-.2-.5-.5v-.7c0-.3.200-.5.500-.5h3.300L6 1zM2.800 5h10.400v8.200c0 1-.8 1.800-1.800 1.800H4.600c-1 0-1.800-.8-1.800-1.800V5zM5.400 6.600v6.200h.8V6.600zM7.600 6.600v6.200h.8V6.600zM9.800 6.600v6.200h.8V6.600z"/></svg></span></td></tr><tr><td><span class="cb"></span></td><td>20</td><td>阿拉伯语</td><td>1</td><td class="ar" dir="rtl">تاجر موزع الميدالية البرونزية</td><td><svg class="thumb" width="18.5" height="16" viewBox="0 0 18.5 16"><defs><linearGradient id="lg" x1="0" y1="0" x2="0" y2="1"><stop offset="0" stop-color="#5078f2"/><stop offset="1" stop-color="#0a1ccf"/></linearGradient></defs><g fill="url(#lg)"><path d="M0 0H9.900L10.800 1.800H0.900Z"/><path d="M0 0.200L2.600 0.200L10.500 14.100L8.900 16Z"/><path d="M4 1.600L6.700 1.600L12.400 11L10.700 12.700Z"/><path d="M7.700 1.600L9.900 0.200L14.400 7.800L12.800 9.900Z"/><path d="M11.300 0.200H18.500L15.500 5.400L14.100 3.300L15.300 2.200H12.600Z"/></g></svg></td><td>0.01</td><td>99.00</td><td>10.00%</td><td>5.00%</td><td>1月</td><td>4</td><td class="st"><i class="dot"></i>显示</td><td>2023-12-05 23:52:34</td><td class="op"><span class="ob b1"><svg class="ic " width="13.2" height="12.4" viewBox="0.8 0.8 14.4 14.4" preserveAspectRatio="none" style=""><path d="M8 .8l2.800 3.100H9.300v2.800h2.800V5.200L15.200 8l-3.100 2.800V9.300H9.300v2.800h1.500L8 15.200l-2.800-3.100h1.500V9.300H3.900v1.500L.8 8l3.100-2.800v1.500h2.800V3.900H5.200z"/></svg></span><span class="ob b2"><svg class="ic " width="11.6" height="10.9" viewBox="1.5 0.7 13.8 13.8" preserveAspectRatio="none" style=""><path d="M1.500 14.500l.8-4 7.500-7.500 3.200 3.200-7.500 7.500-4 .8zM10.700 2.100l1-1c.5-.5 1.300-.5 1.800 0l1.400 1.400c.5.500.5 1.300 0 1.800l-1 1-3.200-3.200z"/></svg></span><span class="ob b3"><svg class="ic " width="10.4" height="11" viewBox="1.5 1 13 14" preserveAspectRatio="none" style=""><path fill-rule="evenodd" d="M6 1h4l.7 1.300H14c.3 0 .5.200.5.500v.7c0 .3-.2.500-.5.500H2c-.3 0-.5-.2-.5-.5v-.7c0-.3.200-.5.500-.5h3.300L6 1zM2.800 5h10.400v8.200c0 1-.8 1.800-1.800 1.800H4.600c-1 0-1.800-.8-1.800-1.800V5zM5.400 6.600v6.200h.8V6.600zM7.600 6.600v6.200h.8V6.600zM9.800 6.600v6.200h.8V6.600z"/></svg></span></td></tr><tr><td><span class="cb"></span></td><td>23</td><td>越南语</td><td>1</td><td>Nhà phân phối huy chương đồng</td><td><svg class="thumb" width="18.5" height="16" viewBox="0 0 18.5 16"><defs><linearGradient id="lg" x1="0" y1="0" x2="0" y2="1"><stop offset="0" stop-color="#5078f2"/><stop offset="1" stop-color="#0a1ccf"/></linearGradient></defs><g fill="url(#lg)"><path d="M0 0H9.900L10.800 1.800H0.900Z"/><path d="M0 0.200L2.600 0.200L10.500 14.100L8.900 16Z"/><path d="M4 1.600L6.700 1.600L12.400 11L10.700 12.700Z"/><path d="M7.700 1.600L9.900 0.200L14.400 7.800L12.800 9.900Z"/><path d="M11.300 0.200H18.500L15.500 5.400L14.100 3.300L15.300 2.200H12.600Z"/></g></svg></td><td>0.01</td><td>99.00</td><td>10.00%</td><td>5.00%</td><td>1月</td><td>4</td><td class="st"><i class="dot"></i>显示</td><td>2023-12-05 23:53:08</td><td class="op"><span class="ob b1"><svg class="ic " width="13.2" height="12.4" viewBox="0.8 0.8 14.4 14.4" preserveAspectRatio="none" style=""><path d="M8 .8l2.800 3.100H9.300v2.800h2.800V5.200L15.200 8l-3.100 2.800V9.300H9.300v2.800h1.500L8 15.200l-2.800-3.100h1.500V9.300H3.900v1.500L.8 8l3.100-2.800v1.500h2.800V3.900H5.200z"/></svg></span><span class="ob b2"><svg class="ic " width="11.6" height="10.9" viewBox="1.5 0.7 13.8 13.8" preserveAspectRatio="none" style=""><path d="M1.500 14.500l.8-4 7.500-7.500 3.200 3.200-7.500 7.500-4 .8zM10.700 2.100l1-1c.5-.5 1.300-.5 1.800 0l1.400 1.400c.5.500.5 1.300 0 1.800l-1 1-3.200-3.200z"/></svg></span><span class="ob b3"><svg class="ic " width="10.4" height="11" viewBox="1.5 1 13 14" preserveAspectRatio="none" style=""><path fill-rule="evenodd" d="M6 1h4l.7 1.300H14c.3 0 .5.200.5.500v.7c0 .3-.2.500-.5.500H2c-.3 0-.5-.2-.5-.5v-.7c0-.3.200-.5.500-.5h3.300L6 1zM2.800 5h10.400v8.200c0 1-.8 1.800-1.800 1.800H4.600c-1 0-1.800-.8-1.800-1.800V5zM5.400 6.600v6.200h.8V6.600zM7.600 6.600v6.200h.8V6.600zM9.800 6.600v6.200h.8V6.600z"/></svg></span></td></tr><tr><td><span class="cb"></span></td><td>6</td><td>中文简体</td><td>2</td><td>银牌分销商</td><td><svg class="thumb" width="18.5" height="16" viewBox="0 0 18.5 16"><defs><linearGradient id="lg" x1="0" y1="0" x2="0" y2="1"><stop offset="0" stop-color="#5078f2"/><stop offset="1" stop-color="#0a1ccf"/></linearGradient></defs><g fill="url(#lg)"><path d="M0 0H9.900L10.800 1.800H0.900Z"/><path d="M0 0.200L2.600 0.200L10.500 14.100L8.900 16Z"/><path d="M4 1.600L6.700 1.600L12.400 11L10.700 12.700Z"/><path d="M7.700 1.600L9.900 0.200L14.400 7.800L12.800 9.900Z"/><path d="M11.300 0.200H18.500L15.500 5.400L14.100 3.300L15.300 2.200H12.600Z"/></g></svg></td><td>0.01</td><td>299.00</td><td>20.00%</td><td>10.00%</td><td>1年</td><td>3</td><td class="st"><i class="dot"></i>显示</td><td>2023-06-10 16:42:46</td><td class="op"><span class="ob b1"><svg class="ic " width="13.2" height="12.4" viewBox="0.8 0.8 14.4 14.4" preserveAspectRatio="none" style=""><path d="M8 .8l2.800 3.100H9.300v2.800h2.800V5.200L15.200 8l-3.100 2.800V9.300H9.300v2.800h1.500L8 15.200l-2.800-3.100h1.500V9.300H3.900v1.500L.8 8l3.100-2.800v1.500h2.800V3.900H5.200z"/></svg></span><span class="ob b2"><svg class="ic " width="11.6" height="10.9" viewBox="1.5 0.7 13.8 13.8" preserveAspectRatio="none" style=""><path d="M1.500 14.500l.8-4 7.500-7.500 3.200 3.200-7.500 7.500-4 .8zM10.700 2.100l1-1c.5-.5 1.300-.5 1.800 0l1.400 1.400c.5.500.5 1.300 0 1.800l-1 1-3.200-3.200z"/></svg></span><span class="ob b3"><svg class="ic " width="10.4" height="11" viewBox="1.5 1 13 14" preserveAspectRatio="none" style=""><path fill-rule="evenodd" d="M6 1h4l.7 1.300H14c.3 0 .5.200.5.500v.7c0 .3-.2.500-.5.500H2c-.3 0-.5-.2-.5-.5v-.7c0-.3.200-.5.500-.5h3.300L6 1zM2.800 5h10.400v8.200c0 1-.8 1.800-1.800 1.800H4.600c-1 0-1.800-.8-1.800-1.800V5zM5.400 6.600v6.200h.8V6.600zM7.600 6.600v6.200h.8V6.600zM9.800 6.600v6.200h.8V6.600z"/></svg></span></td></tr><tr><td><span class="cb"></span></td><td>9</td><td>英文</td><td>2</td><td>silver medal</td><td><svg class="thumb" width="18.5" height="16" viewBox="0 0 18.5 16"><defs><linearGradient id="lg" x1="0" y1="0" x2="0" y2="1"><stop offset="0" stop-color="#5078f2"/><stop offset="1" stop-color="#0a1ccf"/></linearGradient></defs><g fill="url(#lg)"><path d="M0 0H9.900L10.800 1.800H0.900Z"/><path d="M0 0.200L2.600 0.200L10.500 14.100L8.900 16Z"/><path d="M4 1.600L6.700 1.600L12.400 11L10.700 12.700Z"/><path d="M7.700 1.600L9.900 0.200L14.400 7.800L12.800 9.900Z"/><path d="M11.300 0.200H18.500L15.500 5.400L14.100 3.300L15.300 2.200H12.600Z"/></g></svg></td><td>0.01</td><td>299.00</td><td>20.00%</td><td>10.00%</td><td>1年</td><td>3</td><td class="st"><i class="dot"></i>显示</td><td>2023-12-06 10:40:47</td><td class="op"><span class="ob b1"><svg class="ic " width="13.2" height="12.4" viewBox="0.8 0.8 14.4 14.4" preserveAspectRatio="none" style=""><path d="M8 .8l2.800 3.100H9.300v2.800h2.800V5.200L15.200 8l-3.100 2.800V9.300H9.300v2.800h1.500L8 15.200l-2.800-3.100h1.500V9.300H3.900v1.500L.8 8l3.100-2.800v1.500h2.800V3.900H5.200z"/></svg></span><span class="ob b2"><svg class="ic " width="11.6" height="10.9" viewBox="1.5 0.7 13.8 13.8" preserveAspectRatio="none" style=""><path d="M1.500 14.500l.8-4 7.500-7.500 3.200 3.200-7.500 7.500-4 .8zM10.700 2.100l1-1c.5-.5 1.300-.5 1.800 0l1.400 1.400c.5.500.5 1.300 0 1.800l-1 1-3.200-3.200z"/></svg></span><span class="ob b3"><svg class="ic " width="10.4" height="11" viewBox="1.5 1 13 14" preserveAspectRatio="none" style=""><path fill-rule="evenodd" d="M6 1h4l.7 1.300H14c.3 0 .5.200.5.500v.7c0 .3-.2.500-.5.500H2c-.3 0-.5-.2-.5-.5v-.7c0-.3.200-.5.500-.5h3.300L6 1zM2.800 5h10.400v8.200c0 1-.8 1.800-1.800 1.800H4.600c-1 0-1.800-.8-1.800-1.800V5zM5.400 6.600v6.200h.8V6.600zM7.600 6.600v6.200h.8V6.600zM9.800 6.600v6.200h.8V6.600z"/></svg></span></td></tr><tr><td><span class="cb"></span></td><td>12</td><td>中文繁体</td><td>2</td><td>銀牌分銷商</td><td><svg class="thumb" width="18.5" height="16" viewBox="0 0 18.5 16"><defs><linearGradient id="lg" x1="0" y1="0" x2="0" y2="1"><stop offset="0" stop-color="#5078f2"/><stop offset="1" stop-color="#0a1ccf"/></linearGradient></defs><g fill="url(#lg)"><path d="M0 0H9.900L10.800 1.800H0.900Z"/><path d="M0 0.200L2.600 0.200L10.500 14.100L8.900 16Z"/><path d="M4 1.600L6.700 1.600L12.400 11L10.700 12.700Z"/><path d="M7.700 1.600L9.900 0.200L14.400 7.800L12.800 9.900Z"/><path d="M11.300 0.200H18.500L15.500 5.400L14.100 3.300L15.300 2.200H12.600Z"/></g></svg></td><td>0.01</td><td>299.00</td><td>20.00%</td><td>10.00%</td><td>1年</td><td>3</td><td class="st"><i class="dot"></i>显示</td><td>2023-06-10 16:42:46</td><td class="op"><span class="ob b1"><svg class="ic " width="13.2" height="12.4" viewBox="0.8 0.8 14.4 14.4" preserveAspectRatio="none" style=""><path d="M8 .8l2.800 3.100H9.300v2.800h2.800V5.200L15.200 8l-3.100 2.800V9.300H9.300v2.800h1.500L8 15.200l-2.800-3.100h1.500V9.300H3.900v1.500L.8 8l3.100-2.800v1.500h2.800V3.900H5.200z"/></svg></span><span class="ob b2"><svg class="ic " width="11.6" height="10.9" viewBox="1.5 0.7 13.8 13.8" preserveAspectRatio="none" style=""><path d="M1.500 14.500l.8-4 7.500-7.500 3.200 3.200-7.500 7.500-4 .8zM10.700 2.100l1-1c.5-.5 1.300-.5 1.800 0l1.400 1.400c.5.500.5 1.300 0 1.800l-1 1-3.200-3.200z"/></svg></span><span class="ob b3"><svg class="ic " width="10.4" height="11" viewBox="1.5 1 13 14" preserveAspectRatio="none" style=""><path fill-rule="evenodd" d="M6 1h4l.7 1.300H14c.3 0 .5.200.5.500v.7c0 .3-.2.500-.5.500H2c-.3 0-.5-.2-.5-.5v-.7c0-.3.200-.5.500-.5h3.300L6 1zM2.800 5h10.400v8.200c0 1-.8 1.800-1.800 1.800H4.600c-1 0-1.800-.8-1.800-1.800V5zM5.400 6.600v6.200h.8V6.600zM7.600 6.600v6.200h.8V6.600zM9.800 6.600v6.200h.8V6.600z"/></svg></span></td></tr></tbody></table><div id="info">显示第 1 到第 10 条记录，总共 21 条记录 每页显示<span id="psize">10 <i style="display:inline-block;width:0;height:0;border:4px solid transparent;border-bottom-color:#333;border-top:0;vertical-align:2px"></i></span>条记录</div><div class="pg" style="left:1608px;width:68px;border-radius:3px 0 0 3px">上一页</div><div class="pg" style="left:1675px;width:34px;background:#444c69;border-color:#444c69;color:#fff">1</div><div class="pg" style="left:1708px;width:33px">2</div><div class="pg" style="left:1740px;width:34px">3</div><div class="pg" style="left:1773px;width:68px;border-radius:0 3px 3px 0">下一页</div><div style="position:absolute;left:1846px;top:750px;width:50px;height:33px;border:1px solid #d2d6de;background:#fff"></div><div class="pg" style="left:1901px;width:52px;top:751px;height:33px;border-radius:3px;background:#f4f4f4;color:#444;font-size:13px;line-height:30px">跳转</div><svg class="stamp" width="300" height="300" viewBox="838.5 417.4 300 300" style="left:838.5px;top:417.4px"><circle cx="988.5" cy="567.4" r="139.9" fill="none" stroke="#ff0000" stroke-width="5"/><g font-family='"Liberation Sans", sans-serif' font-weight="bold" font-size="25" fill="#ff0000" text-anchor="middle"><text x="882.7" y="589.1" transform="rotate(-101.6 882.7 589.1)">w</text><text x="880.8" y="559.1" transform="rotate(-85.6 880.8 559.1)">w</text><text x="887.3" y="529.8" transform="rotate(-69.6 887.3 529.8)">w</text><text x="901.6" y="503.3" transform="rotate(-53.6 901.6 503.3)">.</text><text x="922.6" y="481.8" transform="rotate(-37.6 922.6 481.8)">5</text><text x="948.7" y="467.0" transform="rotate(-21.6 948.7 467.0)">1</text><text x="978.0" y="459.9" transform="rotate(-5.6 978.0 459.9)">5</text><text x="1008.0" y="461.2" transform="rotate(10.4 1008.0 461.2)">y</text><text x="1036.5" y="470.7" transform="rotate(26.4 1036.5 470.7)">m</text><text x="1061.3" y="487.6" transform="rotate(42.4 1061.3 487.6)">.</text><text x="1080.5" y="510.8" transform="rotate(58.4 1080.5 510.8)">c</text><text x="1092.5" y="538.4" transform="rotate(74.4 1092.5 538.4)">o</text><text x="1096.5" y="568.2" transform="rotate(90.4 1096.5 568.2)">m</text></g><g font-family='"Liberation Sans", sans-serif' font-style="italic" font-size="14" fill="#ff0000" text-anchor="middle"><text x="928.0" y="683.1" transform="rotate(27.6 928.0 683.1)">5</text><text x="941.8" y="689.4" transform="rotate(21.0 941.8 689.4)">1</text><text x="956.2" y="694.0" transform="rotate(14.3 956.2 694.0)">5</text><text x="971.1" y="696.8" transform="rotate(7.6 971.1 696.8)">y</text><text x="986.2" y="698.0" transform="rotate(1.0 986.2 698.0)">m</text><text x="1001.4" y="697.4" transform="rotate(-5.6 1001.4 697.4)">.</text><text x="1016.3" y="695.0" transform="rotate(-12.3 1016.3 695.0)">c</text><text x="1030.9" y="690.9" transform="rotate(-19.0 1030.9 690.9)">o</text><text x="1044.9" y="685.2" transform="rotate(-25.6 1044.9 685.2)">m</text></g><text x="914.8" y="580.2" font-family='"Liberation Sans", sans-serif' font-size="37.6" fill="#ff0000" stroke="#ff0000" stroke-width="0.9" letter-spacing="1.1">515</text><g transform="translate(982,581) skewX(-9)"><text x="0" y="0" font-family='"Noto Serif CJK SC", "Liberation Serif", serif' font-weight="600" font-size="36" fill="#ff0000" letter-spacing="4.5">源码</text></g><g transform="translate(914.2,646.8) scale(1,1.1)"><text x="0" y="0" font-family='"Liberation Sans", sans-serif' font-weight="bold" font-size="24" fill="#ff0000" letter-spacing="1.6">515ym. com</text></g></svg></body></html>
